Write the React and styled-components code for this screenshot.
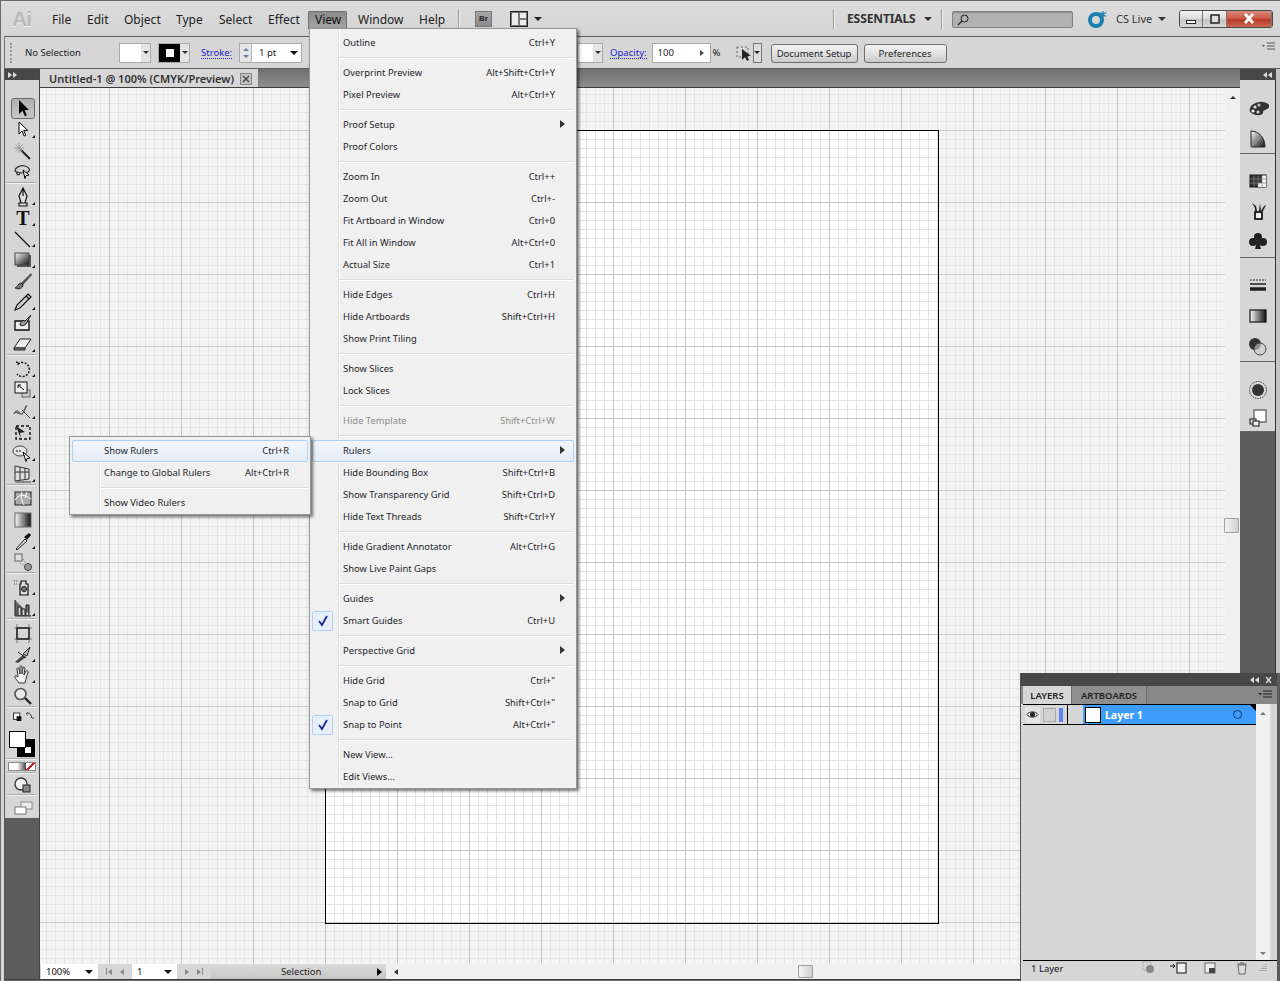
import React from "react";
import styled, { createGlobalStyle } from "styled-components";

const GlobalStyle = createGlobalStyle`
  html, body {
    margin: 0;
    padding: 0;
    background: #d6d6d6;
  }
  * {
    box-sizing: border-box;
  }
`;

const UI_FONT = `"Noto Sans", "Open Sans", "Liberation Sans", sans-serif`;

const Frame = styled.div`
  position: relative;
  width: 1280px;
  height: 981px;
  overflow: hidden;
  display: flex;
  flex-direction: column;
  background: #d6d6d6;
  border-top: 1px solid #6a6a6a;
  border-left: 1px solid #6a6a6a;
  font-family: ${UI_FONT};
  color: #1a1a1a;
`;

const Caret = styled.span`
  display: inline-block;
  width: 0;
  height: 0;
  flex: none;
  margin-left: ${(p) => p.$ml || 0}px;
  border-left: ${(p) => p.$size || 4}px solid transparent;
  border-right: ${(p) => p.$size || 4}px solid transparent;
  border-top: ${(p) => p.$size || 4}px solid ${(p) => p.$color || "#222"};
`;

const UpCaret = styled(Caret)`
  transform: rotate(180deg);
`;

const SideArrow = styled.span`
  display: inline-block;
  width: 0;
  height: 0;
  flex: none;
  border-top: ${(p) => p.$size || 4}px solid transparent;
  border-bottom: ${(p) => p.$size || 4}px solid transparent;
  ${(p) => (p.$left ? "border-right" : "border-left")}: ${(p) => (p.$size || 4) + 1}px solid ${(p) => p.$color || "#222"};
`;

const Spacer = styled.span`
  flex: none;
  width: ${(p) => p.$w}px;
`;

const Filler = styled.span`
  flex: 1;
`;

/* title bar */
const TitleBar = styled.header`
  flex: none;
  height: 35px;
  display: flex;
  align-items: center;
  padding: 0 7px 0 11px;
  background: linear-gradient(#dcdcdc, #d4d4d4);
`;

const Logo = styled.span`
  width: 32px;
  font: bold 21px "Liberation Sans", sans-serif;
  letter-spacing: -1px;
  color: #b9b9b9;
  text-shadow: 0 1px 0 #eee;
`;

const MenuName = styled.span`
  width: ${(p) => p.$w}px;
  height: 18px;
  margin: 2px ${(p) => (p.$active ? 3 : 0)}px 0 0;
  padding-left: ${(p) => (p.$active ? 7 : 8)}px;
  font-size: 12px;
  line-height: 18px;
  color: #222;
  border-radius: 2px 2px 0 0;
  ${(p) =>
    p.$active &&
    `background: linear-gradient(#8b8b8b, #a5a5a5);
     box-shadow: inset 0 0 0 1px #707070;
     color: #111;`}
`;

const BarRule = styled.span`
  width: 1px;
  height: 20px;
  margin: ${(p) => p.$margin};
  background: #9c9c9c;
  box-shadow: 1px 0 0 #efefef;
`;

const BridgeBtn = styled.span`
  width: 17px;
  height: 16px;
  margin-right: 18px;
  background: linear-gradient(#a8a8a8, #8a8a8a);
  border: 1px solid #777;
  font: bold 8px/14px "Liberation Sans", sans-serif;
  text-align: center;
  color: #222;
`;

const Essentials = styled.span`
  width: 77px;
  font-size: 12px;
  font-weight: 700;
  color: #333;
  letter-spacing: -0.1px;
`;

const SearchBox = styled.span`
  width: 121px;
  height: 17px;
  margin: 2px 15px 0 0;
  padding: 2px 0 0 4px;
  background: #b1b1b1;
  border: 1px solid #828282;
  border-radius: 2px;
  box-shadow: inset 0 1px 1px #888;
  display: flex;
`;

const LiveLabel = styled.span`
  width: 42px;
  margin-left: 8px;
  font-size: 11px;
  color: #333;
`;

const WindowButtons = styled.div`
  display: flex;
  height: 18px;
  margin-left: 13px;
  border: 1px solid #4a4a4a;
  border-radius: 3px;
  overflow: hidden;
`;

const WinBtn = styled.span`
  width: ${(p) => p.$w}px;
  display: flex;
  align-items: center;
  justify-content: center;
  border-right: 1px solid #777;
  background: ${(p) =>
    p.$close
      ? "linear-gradient(#d98a7c 0, #cc5b47 45%, #b83a26 55%, #c96a52 100%)"
      : "linear-gradient(#f2f2f2 0, #dcdcdc 45%, #c4c4c4 55%, #dadada 100%)"};
`;

/* control bar */
const ControlBar = styled.section`
  flex: none;
  height: 33px;
  display: flex;
  align-items: center;
  position: relative;
  margin-left: 3px;
  padding-left: 5px;
  border-top: 1px solid #5e5e5e;
  border-bottom: 1px solid #5e5e5e;
  border-left: 1px solid #777;
  background: #d6d6d6;
  font-size: 9.5px;
`;

const Gripper = styled.span`
  width: 2px;
  height: 20px;
  margin-right: 13px;
  border-left: 2px dotted #9a9a9a;
`;

const Swatch = styled.span`
  display: flex;
  width: 32px;
  height: 20px;
  margin-right: ${(p) => p.$gap}px;
  background: #e4e4e4;
  border: 1px solid #a9a9a9;
`;

const SwatchFace = styled.span`
  width: ${(p) => p.$w || 21}px;
  display: flex;
  align-items: center;
  justify-content: center;
  background: ${(p) => (p.$stroke ? "#000" : "#fff")};
`;

const SwatchDrop = styled.span`
  flex: 1;
  height: 100%;
  display: flex;
  align-items: center;
  justify-content: center;
  background: #e4e4e4;
`;

const StrokeCore = styled.span`
  width: 8px;
  height: 8px;
  background: #fff;
`;

const PanelLink = styled.span`
  color: #1d1dd0;
  font-size: 9.5px;
  border-bottom: 1px dotted #1d1dd0;
  line-height: 11px;
  margin-right: ${(p) => p.$gap}px;
`;

const ValueField = styled.span`
  display: flex;
  align-items: center;
  width: ${(p) => p.$w}px;
  height: 20px;
  background: #fff;
  border: 1px solid #a9a9a9;
  font-size: 9.5px;
`;

const OpacityField = styled(ValueField)`
  justify-content: space-between;
  padding: 0 6px 0 5px;
`;

const TinyDrop = styled(ValueField)`
  justify-content: center;
  margin-right: 9px;
  background: #ddd;
  border-color: #777;
`;

const Spinner = styled.span`
  width: 12px;
  height: 18px;
  margin-right: 7px;
  display: flex;
  flex-direction: column;
  align-items: center;
  justify-content: space-evenly;
  background: #e6e6e6;
  border-right: 1px solid #bbb;
`;

const FieldText = styled.span`
  width: ${(p) => p.$w}px;
  padding-left: ${(p) => p.$pl || 0}px;
`;

const PushButton = styled.span`
  width: ${(p) => p.$w}px;
  height: 19px;
  margin: 2px 6px 0 0;
  display: flex;
  align-items: center;
  justify-content: center;
  font-size: 9.5px;
  color: #222;
  border: 1px solid #6f6f6f;
  border-radius: 3px;
  background: linear-gradient(#f2f2f2, #e2e2e2 50%, #cacaca);
`;

const PanelMenuIcon = styled.svg`
  position: absolute;
  right: ${(p) => p.$right}px;
  top: ${(p) => p.$top}px;
`;

/* workspace */
const Workspace = styled.main`
  flex: 1;
  min-height: 0;
  display: flex;
`;

const ToolColumn = styled.aside`
  flex: none;
  width: 36px;
  margin-left: 3px;
  display: flex;
  flex-direction: column;
  border-left: 1px solid #5a5a5a;
  border-right: 1px solid #444;
  background: #5c5c5c;
`;

const ToolHead = styled.div`
  height: 11px;
  display: flex;
  align-items: center;
  padding-left: 3px;
  gap: 1px;
  background: #474747;
  color: #ccc;
`;

const ToolStack = styled.div`
  height: 738px;
  padding-top: 7px;
  background: #d6d6d6;
`;

const DottedGrip = styled.div`
  width: ${(p) => p.$w}px;
  height: 3px;
  margin: 0 auto ${(p) => p.$after}px;
  background-image: radial-gradient(#8c8c8c 0.6px, transparent 0.7px);
  background-size: 2px 2px;
`;

const Tool = styled.div`
  position: relative;
  width: 24px;
  height: ${(p) => p.$h || 21}px;
  margin: ${(p) => (p.$sep ? 2 : 0)}px 0 0 6px;
  display: flex;
  align-items: center;
  justify-content: center;
  ${(p) =>
    p.$active &&
    `background: linear-gradient(#b0b0b0, #c8c8c8);
     border: 1px solid #6a6a6a;
     border-radius: 3px;`}
  ${(p) =>
    p.$more &&
    `&::after {
       content: "";
       position: absolute;
       right: 0;
       bottom: 2px;
       border-left: 3px solid transparent;
       border-bottom: 3px solid #111;
     }`}
`;

const ToolRule = styled.div`
  height: 1px;
  margin: ${(p) => p.$m || "0"} 2px;
  width: 29px;
  background: #f2f2f2;
  box-shadow: 0 -1px 0 #aaa;
`;

const FillStroke = styled.div`
  position: relative;
  height: 29px;
  margin: 5px 0 0 4px;
`;

const FillChip = styled.div`
  position: absolute;
  left: ${(p) => (p.$front ? 0 : 8)}px;
  top: ${(p) => (p.$front ? 1 : 9)}px;
  width: ${(p) => (p.$front ? 17 : 18)}px;
  height: ${(p) => (p.$front ? 17 : 18)}px;
  background: ${(p) => (p.$front ? "#fff" : "#000")};
  border: 1px solid #000;
  &::after {
    content: "";
    display: ${(p) => (p.$front ? "none" : "block")};
    position: absolute;
    right: 3px;
    bottom: 3px;
    width: 6px;
    height: 6px;
    background: #fff;
  }
`;

const ModeRow = styled.div`
  display: flex;
  width: 28px;
  height: 9px;
  margin: 2px 0 0 3px;
  border: 1px solid #888;
`;

const ModeCell = styled.span`
  flex: 1;
  background: ${(p) => p.$bg};
`;

const DocColumn = styled.div`
  flex: 1;
  min-width: 0;
  display: flex;
  flex-direction: column;
`;

const TabStrip = styled.div`
  flex: none;
  height: 19px;
  background: linear-gradient(#6e6e6e, #8f8f8f);
  border-bottom: 1px solid #3c3c3c;
  display: flex;
`;

const DocTab = styled.div`
  width: 218px;
  height: 18px;
  display: flex;
  align-items: center;
  padding: 1px 0 0 9px;
  background: #d6d6d6;
  font-size: 11px;
  font-weight: 600;
  color: #333;
  white-space: nowrap;
`;

const TabClose = styled.span`
  width: 12px;
  height: 12px;
  margin-left: 6px;
  display: flex;
  align-items: center;
  justify-content: center;
  border: 1px solid #888;
  background: #c2c2c2;
`;

const gridLines = (minor, major) => `
  linear-gradient(to right, ${major} 1px, transparent 1px),
  linear-gradient(to bottom, ${major} 1px, transparent 1px),
  linear-gradient(to right, ${minor} 1px, transparent 1px),
  linear-gradient(to bottom, ${minor} 1px, transparent 1px)
`;

const CanvasRow = styled.div`
  flex: 1;
  min-height: 0;
  display: flex;
`;

const Canvas = styled.div`
  flex: 1;
  padding: 42px 0 0 285px;
  background-color: #f4f4f4;
  background-image: ${gridLines("#e6e6e6", "#c8c8c8")};
  background-size: 72px 72px, 72px 72px, 9px 9px, 9px 9px;
  background-position: 69px 42px, 69px 42px, 6px 6px, 6px 6px;
`;

const Artboard = styled.div`
  width: 614px;
  height: 794px;
  border: 1px solid #000;
  background-color: #fff;
  background-image: ${gridLines("#e4e4e4", "#c6c6c6")};
  background-size: 72px 72px, 72px 72px, 9px 9px, 9px 9px;
  background-position: -1px -1px;
`;

const VScroll = styled.div`
  flex: none;
  width: 15px;
  position: relative;
  display: flex;
  justify-content: center;
  padding-top: 8px;
  background: #f0f0f0;
`;

const ScrollThumb = styled.span`
  position: absolute;
  background: linear-gradient(to right, #f4f4f4, #d0d0d0);
  border: 1px solid #a0a0a0;
  border-radius: 1px;
  ${(p) =>
    p.$horizontal
      ? "left: 412px; top: 1px; width: 15px; height: 13px;"
      : "left: -1px; top: 430px; width: 15px; height: 15px;"}
`;

const StatusRow = styled.footer`
  flex: none;
  height: 15px;
  display: flex;
  align-items: stretch;
  font-size: 9.5px;
`;

const StatusField = styled.span`
  width: ${(p) => p.$w}px;
  margin-left: ${(p) => p.$left || 0}px;
  padding: 0 5px 0 5px;
  display: flex;
  align-items: center;
  justify-content: space-between;
  background: #fff;
  color: #111;
`;

const NavCluster = styled.span`
  width: ${(p) => p.$w}px;
  display: flex;
  align-items: center;
  justify-content: space-evenly;
  background: #d6d6d6;
`;

const NavEnd = styled.span`
  display: flex;
  align-items: center;
  gap: 1px;
`;

const NavStop = styled.span`
  width: 1px;
  height: 7px;
  background: #888;
`;

const SelectionBar = styled.span`
  width: 175px;
  padding: 0 4px 0 70px;
  display: flex;
  align-items: center;
  justify-content: space-between;
  background: linear-gradient(#dadada, #c6c6c6);
  color: #222;
`;

const HScroll = styled.span`
  flex: 1;
  position: relative;
  display: flex;
  align-items: center;
  padding-left: 8px;
  background: #f0f0f0;
`;

const Corner = styled.span`
  width: 15px;
  background: #d6d6d6;
`;

const BottomEdge = styled.div`
  flex: none;
  height: 2px;
  background: #6a6a6a;
  border-top: 1px solid #3e3e3e;
  margin-left: 3px;
`;

/* right dock */
const Dock = styled.aside`
  flex: none;
  width: 40px;
  display: flex;
  flex-direction: column;
  border-right: 4px solid #c4c4c4;
  background: #5c5c5c;
  box-shadow: inset -1px 0 0 #333;
`;

const DockHead = styled.div`
  height: 11px;
  display: flex;
  align-items: center;
  justify-content: flex-end;
  padding-right: 4px;
  gap: 1px;
  background: #474747;
`;

const DockGroup = styled.div`
  height: ${(p) => p.$h}px;
  margin-right: 1px;
  padding-top: 4px;
  display: flex;
  flex-direction: column;
  align-items: center;
  background: #d6d6d6;
  border-bottom: 1px solid #666;
`;

const DockIcon = styled.div`
  height: ${(p) => p.$h || 30}px;
  display: flex;
  align-items: center;
  justify-content: center;
`;

/* menus */
const MenuBox = styled.nav`
  position: absolute;
  left: ${(p) => p.$x}px;
  top: ${(p) => p.$y}px;
  width: ${(p) => p.$w}px;
  padding: 3px 2px 0;
  background: #f0f0f0;
  border: 1px solid #979797;
  box-shadow: 2px 2px 3px rgba(0, 0, 0, 0.55);
  z-index: ${(p) => p.$z};
  font-size: 9.4px;
  &::before {
    content: "";
    position: absolute;
    left: ${(p) => p.$gutter}px;
    top: 0;
    bottom: 0;
    width: 1px;
    background: #e2e2e2;
    box-shadow: 1px 0 0 #fff;
  }
`;

const MenuRow = styled.div`
  position: relative;
  height: 22px;
  display: flex;
  align-items: center;
  justify-content: space-between;
  padding: 0 ${(p) => (p.$sub ? 8 : 18)}px 2px ${(p) => p.$indent}px;
  color: ${(p) => (p.$off ? "#8d8d8d" : "#1f1f2a")};
  border: 1px solid ${(p) => (p.$hot ? "#aecff7" : "transparent")};
  border-radius: 2px;
  ${(p) => p.$hot && "background: linear-gradient(#f3f6fb, #e4ecf7);"}
`;

const MenuRule = styled.div`
  position: relative;
  height: 8px;
  margin-left: ${(p) => p.$inset}px;
  &::after {
    content: "";
    position: absolute;
    left: 0;
    right: 0;
    top: 3px;
    height: 1px;
    background: #dcdcdc;
    box-shadow: 0 1px 0 #fff;
  }
`;

const CheckMark = styled.span`
  position: absolute;
  left: 0;
  top: 0;
  width: 21px;
  height: 20px;
  display: flex;
  align-items: center;
  justify-content: center;
  background: #e6effb;
  border: 1px solid #aecff7;
  border-radius: 2px;
  margin: 0 0 0 -1px;
`;

/* layers panel */
const LayersPanel = styled.section`
  position: absolute;
  left: 1019px;
  top: 672px;
  width: 260px;
  height: 308px;
  z-index: 2;
  display: flex;
  flex-direction: column;
  background: #d6d6d6;
  border-left: 1px solid #555;
  border-right: 3px solid #5a5a5a;
`;

const PanelTitle = styled.div`
  height: 13px;
  display: flex;
  align-items: center;
  justify-content: flex-end;
  gap: 1px;
  padding-right: 4px;
  background: #474747;
`;

const PanelTabs = styled.div`
  position: relative;
  height: 18px;
  display: flex;
  padding-left: 2px;
  background: #888;
`;

const PanelTab = styled.span`
  width: ${(p) => p.$w}px;
  display: flex;
  align-items: center;
  justify-content: center;
  font-size: 9.5px;
  font-weight: 600;
  color: #222;
  background: ${(p) => (p.$active ? "#d6d6d6" : "#8f8f8f")};
  border-right: 1px solid #6c6c6c;
`;

const LayerBody = styled.div`
  flex: 1;
  min-height: 0;
  display: flex;
  padding: 0 7px 0 2px;
`;

const LayerList = styled.div`
  flex: 1;
`;

const LayerRow = styled.div`
  height: 21px;
  display: flex;
  align-items: center;
  border-top: 1px solid #000;
  border-bottom: 1px solid #000;
`;

const EyeCell = styled.span`
  width: 15px;
  height: 16px;
  margin-left: 2px;
  display: flex;
  align-items: center;
  justify-content: center;
  background: #e4e4e4;
`;

const LockCell = styled.span`
  width: 13px;
  height: 14px;
  margin-left: 3px;
  background: #d2d2d2;
  border: 1px solid #aaa;
`;

const ColorStrip = styled.span`
  width: 4px;
  height: 14px;
  margin-left: 3px;
  background: #5b84f5;
`;

const RowDivider = styled.span`
  width: 1px;
  height: 19px;
  margin: 0 15px 0 4px;
  background: #000;
`;

const LayerHot = styled.span`
  position: relative;
  flex: 1;
  height: 19px;
  display: flex;
  align-items: center;
  padding-left: 2px;
  background: #3f9cff;
  color: #fff;
  font-size: 10.5px;
  font-weight: 700;
  &::after {
    content: "";
    position: absolute;
    right: 0;
    top: 0;
    border-left: 6px solid transparent;
    border-top: 6px solid #000;
  }
`;

const LayerThumb = styled.span`
  width: 16px;
  height: 16px;
  margin-right: 4px;
  background: #fff;
  border: 1px solid #000;
`;

const TargetRing = styled.span`
  position: absolute;
  right: 14px;
  top: 5px;
  width: 9px;
  height: 9px;
  border: 1px solid #123a66;
  border-radius: 50%;
`;

const LayerScroll = styled.div`
  flex: none;
  width: 14px;
  padding: 8px 0 5px;
  display: flex;
  flex-direction: column;
  align-items: center;
  justify-content: space-between;
  background: #f0f0f0;
`;

const PanelFoot = styled.div`
  height: 17px;
  margin: 0 0 4px 2px;
  display: flex;
  align-items: center;
  padding: 0 0 2px 8px;
  border-top: 1px solid #000;
  font-size: 9.5px;
  color: #112;
`;

const FootIcon = styled.span`
  display: flex;
  margin-left: ${(p) => p.$left}px;
`;

const HiddenDefs = styled.svg`
  position: absolute;
  width: 0;
  height: 0;
`;

const Doubled = ({ left, color = "#ddd" }) => (
  <>
    <SideArrow $left={left} $size={3} $color={color} />
    <SideArrow $left={left} $size={3} $color={color} />
  </>
);

const g = "url(#fadeDark)";
const TOOL_ART = {
  select: <path d="M7 1v14l3.5-3.3 2.4 5.5 2-.9-2.4-5.3H17z" fill="#000" />,
  direct: <path d="M7 2v12l3-3 2.2 5 1.6-.8-2.1-4.8h4z" fill="#fff" stroke="#000" />,
  wand: (
    <>
      <path d="M9 9l9 9" stroke="#222" strokeWidth="2" />
      <path d="M7 2v10M2 7h10M3.5 3.5l7 7M10.5 3.5l-7 7" stroke="#8a8a8a" strokeWidth=".8" />
    </>
  ),
  lasso: (
    <>
      <path d="M3 9c0-4 6-6 10-5s6 4 3 6-7 1-11 0c-2-.5-2-1-2-1zM5 10c-1 3 2 4 3 1" fill="none" stroke="#333" strokeWidth="1.2" />
      <path d="M11 8l6 5-3 .5-1 3z" fill="#fff" stroke="#000" />
    </>
  ),
  pen: <path d="M11 1l4 8-2 7H9L7 9zM11 3v6M7 16h8v3H7z" fill="#ddd" stroke="#111" strokeWidth="1.2" />,
  type: (
    <text x="11" y="17" textAnchor="middle" fontFamily="Liberation Serif, serif" fontWeight="700" fontSize="20" fill="#111">
      T
    </text>
  ),
  line: <path d="M3 3l15 15" stroke="#111" strokeWidth="1.3" />,
  rect: (
    <>
      <rect x="5" y="5" width="14" height="12" fill="#555" />
      <rect x="3" y="3" width="14" height="12" fill={g} stroke="#444" />
    </>
  ),
  brush: (
    <>
      <path d="M19 2L9 12l2 2L20 4z" fill="#555" />
      <path d="M9 12c-3 0-3 4-6 5 4 2 8 0 8-3z" fill="#777" stroke="#222" />
    </>
  ),
  pencil: <path d="M16 2l3 3L8 16l-5 2 2-5zM14 4l3 3" fill="#ccc" stroke="#111" strokeWidth="1.2" />,
  blob: (
    <>
      <path d="M3 8h14v9H3z" fill="#eee" stroke="#111" strokeWidth="1.4" />
      <path d="M8 12c0-4 4-5 5-4l6-6-5 9c-2 2-5 2-6 1z" fill="#999" stroke="#222" />
    </>
  ),
  eraser: (
    <>
      <path d="M8 5h11l-6 9H2z" fill="#eee" stroke="#222" />
      <path d="M2 14h11v2H2z" fill="#888" stroke="#222" />
    </>
  ),
  rotate: <path d="M6 5a7 7 0 1 1-1 10M4 3l3 1-2 3" fill="none" stroke="#111" strokeWidth="1.5" strokeDasharray="2 1.4" />,
  scale: (
    <>
      <rect x="10" y="10" width="8" height="7" fill="#ccc" stroke="#666" />
      <rect x="3" y="2" width="12" height="11" fill="#eee" stroke="#111" />
      <path d="M6 5l6 5M6 5h3M6 5v3" stroke="#111" />
    </>
  ),
  warp: (
    <>
      <path d="M2 13c2-6 5-2 7 0s3-5 5-8-2 8-5 8-5-3-7 0z" fill="#888" stroke="#555" />
      <path d="M10 9l8 8" stroke="#111" strokeDasharray="2 1" />
    </>
  ),
  free: (
    <>
      <rect x="4" y="4" width="14" height="13" fill="none" stroke="#111" strokeDasharray="3 2" strokeWidth="1.4" />
      <path d="M4 4l9 6-5 1 1 6z" fill="#222" />
    </>
  ),
  shape: (
    <>
      <ellipse cx="8" cy="8" rx="7" ry="5" fill="#e6e6e6" stroke="#444" />
      <circle cx="5" cy="8" r="1" fill="#555" />
      <circle cx="8" cy="8" r="1" fill="#555" />
      <path d="M11 9l7 6-3 .5-1 3z" fill="#fff" stroke="#000" />
    </>
  ),
  persp: (
    <>
      <path d="M3 2l14 3v10l-14 2z" fill="#ddd" stroke="#333" />
      <path d="M8 3v13M13 4v11M3 8h14" stroke="#333" />
      <path d="M3 18h16" stroke="#888" strokeWidth="2" />
    </>
  ),
  mesh: (
    <>
      <rect x="3" y="3" width="16" height="13" fill="#aaa" stroke="#222" />
      <path d="M3 11c4-6 9-6 16-1M10 3c-2 5 0 9 2 13M15 3l-2 6" fill="none" stroke="#fff" />
    </>
  ),
  gradient: <rect x="3" y="3" width="16" height="14" fill="url(#fadeSide)" stroke="#666" />,
  dropper: (
    <>
      <path d="M4 18l9-10 2 2-10 9z" fill="#ddd" stroke="#222" />
      <path d="M12 6l5-4 2 2-4 5z" fill="#111" />
    </>
  ),
  blend: (
    <>
      <rect x="3" y="2" width="7" height="7" fill="#ddd" stroke="#666" />
      <circle cx="16" cy="15" r="3.5" fill="#999" stroke="#444" />
      <path d="M11 7l3 5M8 11l4 3" stroke="#666" strokeDasharray="1 2" />
    </>
  ),
  spray: (
    <>
      <path d="M2 4h4M2 7h3" stroke="#333" strokeDasharray="1 1.4" />
      <path d="M9 4h5v3h2v11H8V7h1z" fill="#ddd" stroke="#111" strokeWidth="1.2" />
      <circle cx="12" cy="12" r="2.5" fill="#777" stroke="#111" />
    </>
  ),
  graph: <path d="M3 2v16h16M6 17V9h3v8M10 17v-6h3v6M14 17V7h3v10" fill="#666" stroke="#222" />,
  artboard: (
    <>
      <rect x="5" y="5" width="12" height="11" fill="none" stroke="#111" strokeWidth="1.5" />
      <path d="M2 5h2M18 5h2M2 16h2M18 16h2M5 1v3M17 1v3M5 17v3M17 17v3" stroke="#777" />
    </>
  ),
  slice: (
    <>
      <path d="M3 18l8-7 3 2-8 6z" fill="#444" />
      <path d="M11 10l7-7-3 9zM6 8l8 6" fill="#bbb" stroke="#222" />
    </>
  ),
  hand: (
    <path d="M7 18c-2-3-5-6-4-7s3 1 3 1L5 4c0-1.5 2-1.5 2 0l1 5V2c0-1.5 2-1.5 2 0v7l1-6c0-1.5 2-1 2 0l-1 7 2-4c1-1 2 0 2 1l-2 7-1 4z" fill="#f2f2f2" stroke="#333" />
  ),
  zoom: (
    <>
      <circle cx="8.5" cy="8" r="5.5" fill="#e8e8e8" stroke="#555" strokeWidth="1.6" />
      <path d="M13 12l6 6" stroke="#222" strokeWidth="2.4" />
    </>
  ),
};

const TOOLS = [
  ["select", false, false, true], ["direct", true], ["wand"], ["lasso"],
  "rule",
  ["pen", true], ["type", true], ["line", true], ["rect", true], ["brush"], ["pencil", true], ["blob"], ["eraser", true],
  "rule",
  ["rotate", true], ["scale", true], ["warp", true], ["free"], ["shape", true], ["persp", true],
  "rule",
  ["mesh"], ["gradient"], ["dropper", true], ["blend"],
  "rule",
  ["spray", true], ["graph", true],
  "rule",
  ["artboard"], ["slice", true], ["hand", true], ["zoom"],
];

const DOCK_ART = {
  palette: (
    <>
      <path d="M3 13C1 7 9 2 16 3s8 5 4 7-4 2-4 4-7 4-13-1z" fill="#333" />
      <circle cx="8" cy="8" r="1.6" fill="#ddd" />
      <circle cx="12" cy="6" r="1.6" fill="#bbb" />
      <circle cx="6" cy="12" r="1.6" fill="#eee" />
      <circle cx="11" cy="13" r="1.6" fill="#ccc" />
    </>
  ),
  guide: (
    <>
      <path d="M4 3c8 0 14 7 14 16H4z" fill={g} stroke="#222" />
      <path d="M4 19L14 9" stroke="#999" />
    </>
  ),
  swatches: (
    <>
      <rect x="3" y="4" width="16" height="12" fill="#333" stroke="#111" />
      <path d="M15 4.5h4V8h-4zM11 12h4v4h-4zM15 12h4v4h-4zM15 8h4v4h-4z" fill="#f2f2f2" />
      <path d="M11 4.5v11M15 4.5v11M7 4.5v11M3 8h16M3 12h16" stroke="#888" strokeWidth=".7" />
    </>
  ),
  brushes: (
    <>
      <path d="M8 10V7L5 2 9 5l1 5M12 10l1-8 1 8M14 10l3-5 2-1-3 6z" fill="#222" />
      <rect x="8" y="11" width="7" height="7" fill="#eee" stroke="#000" strokeWidth="1.6" />
    </>
  ),
  clubs: (
    <>
      <circle cx="11" cy="6" r="4" fill="#222" />
      <circle cx="6" cy="11" r="4" fill="#222" />
      <circle cx="16" cy="11" r="4" fill="#222" />
      <path d="M10 10h2l2 8H8z" fill="#222" />
    </>
  ),
  stroke: (
    <>
      <path d="M3 4h16" stroke="#333" strokeDasharray="2 1" />
      <path d="M3 8h16" stroke="#222" strokeWidth="1.5" />
      <path d="M3 13h16" stroke="#222" strokeWidth="3.5" />
    </>
  ),
  grad: <rect x="3" y="4" width="16" height="12" fill="url(#fadeSide)" stroke="#111" strokeWidth="1.2" />,
  transparency: (
    <>
      <circle cx="8" cy="8" r="6" fill="#333" />
      <circle cx="13" cy="13" r="6" fill="#ccc" fillOpacity=".6" stroke="#444" />
    </>
  ),
  appearance: (
    <>
      <circle cx="11" cy="10" r="8.5" fill="none" stroke="#333" strokeDasharray="1.5 1" />
      <circle cx="11" cy="10" r="6" fill="#333" />
    </>
  ),
  styles: (
    <>
      <rect x="7" y="3" width="12" height="12" fill="#fff" stroke="#333" />
      <rect x="3" y="12" width="6" height="5" fill="#ddd" stroke="#111" />
      <rect x="6" y="14" width="6" height="5" fill="#eee" stroke="#111" />
    </>
  ),
};

const DOCK_GROUPS = [
  { h: 74, icons: ["palette", "guide"], pad: 7 },
  { h: 104, icons: ["swatches", "brushes", "clubs"], pad: 5 },
  { h: 104, icons: ["stroke", "grad", "transparency"], pad: 6 },
  { h: 70, icons: ["appearance", "styles"], pad: 7 },
];

const VIEW_MENU = [
  [{ l: "Outline", s: "Ctrl+Y" }],
  [{ l: "Overprint Preview", s: "Alt+Shift+Ctrl+Y" }, { l: "Pixel Preview", s: "Alt+Ctrl+Y" }],
  [{ l: "Proof Setup", sub: true }, { l: "Proof Colors" }],
  [
    { l: "Zoom In", s: "Ctrl++" },
    { l: "Zoom Out", s: "Ctrl+-" },
    { l: "Fit Artboard in Window", s: "Ctrl+0" },
    { l: "Fit All in Window", s: "Alt+Ctrl+0" },
    { l: "Actual Size", s: "Ctrl+1" },
  ],
  [{ l: "Hide Edges", s: "Ctrl+H" }, { l: "Hide Artboards", s: "Shift+Ctrl+H" }, { l: "Show Print Tiling" }],
  [{ l: "Show Slices" }, { l: "Lock Slices" }],
  [{ l: "Hide Template", s: "Shift+Ctrl+W", off: true }],
  [
    { l: "Rulers", sub: true, hot: true },
    { l: "Hide Bounding Box", s: "Shift+Ctrl+B" },
    { l: "Show Transparency Grid", s: "Shift+Ctrl+D" },
    { l: "Hide Text Threads", s: "Shift+Ctrl+Y" },
  ],
  [{ l: "Hide Gradient Annotator", s: "Alt+Ctrl+G" }, { l: "Show Live Paint Gaps" }],
  [{ l: "Guides", sub: true }, { l: "Smart Guides", s: "Ctrl+U", check: true }],
  [{ l: "Perspective Grid", sub: true }],
  [{ l: "Hide Grid", s: 'Ctrl+"' }, { l: "Snap to Grid", s: 'Shift+Ctrl+"' }, { l: "Snap to Point", s: 'Alt+Ctrl+"', check: true }],
  [{ l: "New View..." }, { l: "Edit Views..." }],
];

const RULER_MENU = [
  [{ l: "Show Rulers", s: "Ctrl+R", hot: true }, { l: "Change to Global Rulers", s: "Alt+Ctrl+R" }],
  [{ l: "Show Video Rulers" }],
];

const TOP_MENUS = [
  ["File", 35], ["Edit", 37], ["Object", 52], ["Type", 43], ["Select", 49], ["Effect", 48], ["View", 39, true], ["Window", 61], ["Help", 48],
];

function Menu({ groups, x, y, w, z, gutter, indent, inset }) {
  return (
    <MenuBox $x={x} $y={y} $w={w} $z={z} $gutter={gutter}>
      {groups.map((group, i) => (
        <React.Fragment key={i}>
          {i > 0 && <MenuRule $inset={inset} />}
          {group.map((item) => (
            <MenuRow key={item.l} $indent={indent} $hot={item.hot} $off={item.off} $sub={item.sub}>
              {item.check && (
                <CheckMark>
                  <svg width="12" height="12" viewBox="0 0 12 12">
                    <path d="M2 6l3 4 5-9" fill="none" stroke="#1c2a9c" strokeWidth="1.8" />
                  </svg>
                </CheckMark>
              )}
              <span>{item.l}</span>
              {item.s && <span>{item.s}</span>}
              {item.sub && <SideArrow $size={4} $color="#333" />}
            </MenuRow>
          ))}
        </React.Fragment>
      ))}
    </MenuBox>
  );
}

export default function App() {
  return (
    <>
      <GlobalStyle />
      <Frame>
        <HiddenDefs>
          <defs>
            <linearGradient id="fadeDark" x1="0" y1="0" x2="1" y2="1">
              <stop offset="0" stopColor="#fafafa" />
              <stop offset="1" stopColor="#111" />
            </linearGradient>
            <linearGradient id="fadeSide" x1="0" y1="0" x2="1" y2="0">
              <stop offset="0" stopColor="#fafafa" />
              <stop offset="1" stopColor="#111" />
            </linearGradient>
          </defs>
        </HiddenDefs>

        <TitleBar>
          <Logo>Ai</Logo>
          {TOP_MENUS.map(([name, w, active]) => (
            <MenuName key={name} $w={w} $active={active}>
              {name}
            </MenuName>
          ))}
          <BarRule $margin="0 16px 0 -1px" />
          <BridgeBtn>Br</BridgeBtn>
          <svg width="18" height="16" viewBox="0 0 18 16">
            <rect x=".5" y=".5" width="17" height="15" fill="#777" stroke="#222" />
            <path d="M2 2h6v12H2zM10 2h6v5h-6zM10 9h6v5h-6z" fill="#eee" />
          </svg>
          <Caret $size={4} $color="#222" $ml={6} />
          <Filler />
          <BarRule $margin="0 13px 0 0" />
          <Essentials>ESSENTIALS</Essentials>
          <Caret $size={4} $color="#333" />
          <BarRule $margin="0 10px 0 9px" />
          <SearchBox>
            <svg width="12" height="12" viewBox="0 0 12 12">
              <circle cx="7.5" cy="4.5" r="3.5" fill="none" stroke="#222" />
              <path d="M5 7L1 11" stroke="#222" strokeWidth="1.3" />
            </svg>
          </SearchBox>
          <svg width="20" height="18" viewBox="0 0 20 18">
            <circle cx="8" cy="10" r="6" fill="none" stroke="#1c7fb0" strokeWidth="4" />
            <path d="M15 1v7M12 2.5l6 4M18 2.5l-6 4" stroke="#1c7fb0" strokeWidth="1.2" />
          </svg>
          <LiveLabel>CS Live</LiveLabel>
          <Caret $size={4} $color="#333" />
          <WindowButtons>
            <WinBtn $w={23}>
              <svg width="12" height="10" viewBox="0 0 12 10">
                <rect x="1.5" y="6.5" width="9" height="3" fill="#fff" stroke="#222" />
              </svg>
            </WinBtn>
            <WinBtn $w={24}>
              <svg width="10" height="10" viewBox="0 0 10 10">
                <rect x="1" y="1" width="8" height="8" fill="#ddd" stroke="#222" strokeWidth="1.5" />
              </svg>
            </WinBtn>
            <WinBtn $w={45} $close>
              <svg width="12" height="11" viewBox="0 0 12 11">
                <path d="M2 1l8 9M10 1l-8 9" stroke="#fff" strokeWidth="2.8" />
              </svg>
            </WinBtn>
          </WindowButtons>
        </TitleBar>

        <ControlBar>
          <Gripper />
          <FieldText $w={94}>No Selection</FieldText>
          <Swatch $gap={7}>
            <SwatchFace />
            <SwatchDrop>
              <Caret $size={3} $color="#333" />
            </SwatchDrop>
          </Swatch>
          <Swatch $gap={11}>
            <SwatchFace $stroke>
              <StrokeCore />
            </SwatchFace>
            <SwatchDrop>
              <Caret $size={3} $color="#333" />
            </SwatchDrop>
          </Swatch>
          <PanelLink $gap={7}>Stroke:</PanelLink>
          <ValueField $w={63}>
            <Spinner>
              <UpCaret $size={3} $color="#6a7fa8" />
              <Caret $size={3} $color="#6a7fa8" />
            </Spinner>
            <FieldText $w={31}>1 pt</FieldText>
            <Caret $size={4} $color="#111" />
          </ValueField>
          <Spacer $w={275} />
          <ValueField $w={26}>
            <SwatchFace $w={15} />
            <SwatchDrop>
              <Caret $size={3} $color="#333" />
            </SwatchDrop>
          </ValueField>
          <Spacer $w={7} />
          <PanelLink $gap={5}>Opacity:</PanelLink>
          <OpacityField $w={59}>
            <span>100</span>
            <SideArrow $size={3} $color="#444" />
          </OpacityField>
          <FieldText $w={24} $pl={2}>
            %
          </FieldText>
          <svg width="18" height="18" viewBox="0 0 18 18">
            <rect x="2" y="3" width="11" height="10" fill="none" stroke="#666" strokeDasharray="2 2" />
            <path d="M7 5v11l3-3 2 4 2-1-2-4h4z" fill="#222" />
          </svg>
          <TinyDrop $w={9}>
            <Caret $size={3} $color="#222" />
          </TinyDrop>
          <PushButton $w={87}>Document Setup</PushButton>
          <PushButton $w={83}>Preferences</PushButton>
          <PanelMenuIcon $right={5} $top={5} width="13" height="9" viewBox="0 0 13 9">
            <path d="M5 1h8M5 4h8M5 7h8" stroke="#555" />
            <path d="M0 3h3L1.5 5z" fill="#555" />
          </PanelMenuIcon>
        </ControlBar>

        <Workspace>
          <ToolColumn>
            <ToolHead>
              <Doubled />
            </ToolHead>
            <ToolStack>
              <DottedGrip $w={26} $after={8} />
              {TOOLS.map((t, i) =>
                t === "rule" ? (
                  <ToolRule key={i} $m="1px" />
                ) : (
                  <Tool key={t[0]} $more={t[1]} $active={t[3]} $sep={TOOLS[i - 1] === "rule"}>
                    <svg width="22" height="20" viewBox="0 0 22 20">
                      {TOOL_ART[t[0]]}
                    </svg>
                  </Tool>
                )
              )}
              <ToolRule $m="1px" />
              <Tool $h={16}>
                <svg width="30" height="16" viewBox="0 0 30 16">
                  <rect x="3" y="3" width="8" height="8" fill="#fff" stroke="#111" />
                  <rect x="7" y="7" width="6" height="6" fill="#111" />
                  <path d="M20 3c4 0 6 3 6 6M19 4l2-2M19 4l2 2M27 10l-2-2M27 10l2-2" fill="none" stroke="#222" />
                </svg>
              </Tool>
              <FillStroke>
                <FillChip />
                <FillChip $front />
              </FillStroke>
              <ToolRule />
              <ModeRow>
                <ModeCell $bg="#fff" />
                <ModeCell $bg="linear-gradient(to right,#eee,#444)" />
                <ModeCell $bg="linear-gradient(135deg,#fff 40%,#d02030 40%,#d02030 60%,#fff 60%)" />
              </ModeRow>
              <ToolRule $m="2px" />
              <Tool $h={18}>
                <svg width="20" height="18" viewBox="0 0 20 18">
                  <circle cx="8" cy="8" r="6" fill="#f2f2f2" stroke="#333" strokeWidth="1.3" />
                  <rect x="10" y="9" width="7" height="7" fill="#888" stroke="#222" />
                </svg>
              </Tool>
              <ToolRule $m="1px" />
              <Tool $h={22}>
                <svg width="22" height="16" viewBox="0 0 22 16">
                  <rect x="9" y="2" width="11" height="7" fill="#eee" stroke="#888" />
                  <rect x="3" y="7" width="11" height="7" fill="#fff" stroke="#777" />
                </svg>
              </Tool>
            </ToolStack>
          </ToolColumn>

          <DocColumn>
            <TabStrip>
              <DocTab>
                Untitled-1 @ 100% (CMYK/Preview)
                <TabClose>
                  <svg width="8" height="8" viewBox="0 0 8 8">
                    <path d="M1 1l6 6M7 1l-6 6" stroke="#444" strokeWidth="1.3" />
                  </svg>
                </TabClose>
              </DocTab>
            </TabStrip>
            <CanvasRow>
              <Canvas>
                <Artboard />
              </Canvas>
              <VScroll>
                <UpCaret $size={3} $color="#333" />
                <ScrollThumb />
              </VScroll>
            </CanvasRow>
            <StatusRow>
              <StatusField $w={57} $left={1}>
                100%
                <Caret $size={4} $color="#111" />
              </StatusField>
              <NavCluster $w={34}>
                <NavEnd>
                  <NavStop />
                  <SideArrow $left $size={3} $color="#888" />
                </NavEnd>
                <SideArrow $left $size={3} $color="#888" />
              </NavCluster>
              <StatusField $w={45}>
                1
                <Caret $size={4} $color="#111" />
              </StatusField>
              <NavCluster $w={34}>
                <SideArrow $size={3} $color="#888" />
                <NavEnd>
                  <SideArrow $size={3} $color="#888" />
                  <NavStop />
                </NavEnd>
              </NavCluster>
              <SelectionBar>
                Selection
                <SideArrow $size={4} $color="#000" />
              </SelectionBar>
              <HScroll>
                <SideArrow $left $size={3} $color="#333" />
                <ScrollThumb $horizontal />
              </HScroll>
              <Corner />
            </StatusRow>
          </DocColumn>

          <Dock>
            <DockHead>
              <Doubled left />
            </DockHead>
            {DOCK_GROUPS.map((group, i) => (
              <DockGroup key={i} $h={group.h}>
                <DottedGrip $w={26} $after={group.pad} />
                {group.icons.map((name) => (
                  <DockIcon key={name}>
                    <svg width="22" height="20" viewBox="0 0 22 20">
                      {DOCK_ART[name]}
                    </svg>
                  </DockIcon>
                ))}
              </DockGroup>
            ))}
          </Dock>
        </Workspace>
        <BottomEdge />

        <Menu groups={VIEW_MENU} x={308} y={27} w={268} z={3} gutter={28} indent={30} inset={27} />
        <Menu groups={RULER_MENU} x={68} y={435} w={242} z={4} gutter={29} indent={31} inset={28} />

        <LayersPanel>
          <PanelTitle>
            <Doubled left />
            <svg width="13" height="8" viewBox="0 0 13 8">
              <path d="M6 1l5 6M11 1L6 7" stroke="#ddd" strokeWidth="1.3" />
            </svg>
          </PanelTitle>
          <PanelTabs>
            <PanelTab $w={49} $active>
              LAYERS
            </PanelTab>
            <PanelTab $w={75}>ARTBOARDS</PanelTab>
            <PanelMenuIcon $right={5} $top={4} width="14" height="9" viewBox="0 0 14 9">
              <path d="M5 1h9M5 4h9M5 7h9" stroke="#222" />
              <path d="M0 3h4L2 5z" fill="#222" />
            </PanelMenuIcon>
          </PanelTabs>
          <LayerBody>
            <LayerList>
              <LayerRow>
                <EyeCell>
                  <svg width="13" height="9" viewBox="0 0 13 9">
                    <path d="M1 4.5C3 1 10 1 12 4.5 10 8 3 8 1 4.5z" fill="#ddd" stroke="#333" />
                    <circle cx="6.5" cy="4.5" r="2.5" fill="#222" />
                  </svg>
                </EyeCell>
                <LockCell />
                <ColorStrip />
                <RowDivider />
                <LayerHot>
                  <LayerThumb />
                  Layer 1
                  <TargetRing />
                </LayerHot>
              </LayerRow>
            </LayerList>
            <LayerScroll>
              <UpCaret $size={3} $color="#777" />
              <Caret $size={3} $color="#777" />
            </LayerScroll>
          </LayerBody>
          <PanelFoot>
            1 Layer
            <FootIcon $left={78}>
              <svg width="16" height="14" viewBox="0 0 16 14">
                <rect x="2" y="1" width="8" height="8" fill="none" stroke="#aaa" strokeDasharray="2 1" />
                <circle cx="9" cy="8" r="4" fill="#888" />
              </svg>
            </FootIcon>
            <FootIcon $left={12}>
              <svg width="18" height="14" viewBox="0 0 18 14">
                <path d="M1 5h5M4 3l2 2-2 2" fill="none" stroke="#111" />
                <rect x="8" y="2" width="9" height="10" fill="#eee" stroke="#111" />
              </svg>
            </FootIcon>
            <FootIcon $left={17}>
              <svg width="12" height="14" viewBox="0 0 12 14">
                <rect x="1" y="2" width="10" height="10" fill="#eee" stroke="#666" />
                <path d="M5 7h6v5H5z" fill="#444" />
              </svg>
            </FootIcon>
            <FootIcon $left={20}>
              <svg width="12" height="14" viewBox="0 0 12 14">
                <path d="M2 4h8l-1 9H3zM1 3h10M4 2h4" fill="#ddd" stroke="#666" />
              </svg>
            </FootIcon>
            <FootIcon $left={9}>
              <svg width="10" height="10" viewBox="0 0 10 10">
                <path d="M9 1v1M7 3v1M9 3v1M5 5v1M7 5v1M9 5v1M3 7v1M5 7v1M7 7v1M9 7v1" stroke="#888" />
              </svg>
            </FootIcon>
          </PanelFoot>
        </LayersPanel>
      </Frame>
    </>
  );
}
